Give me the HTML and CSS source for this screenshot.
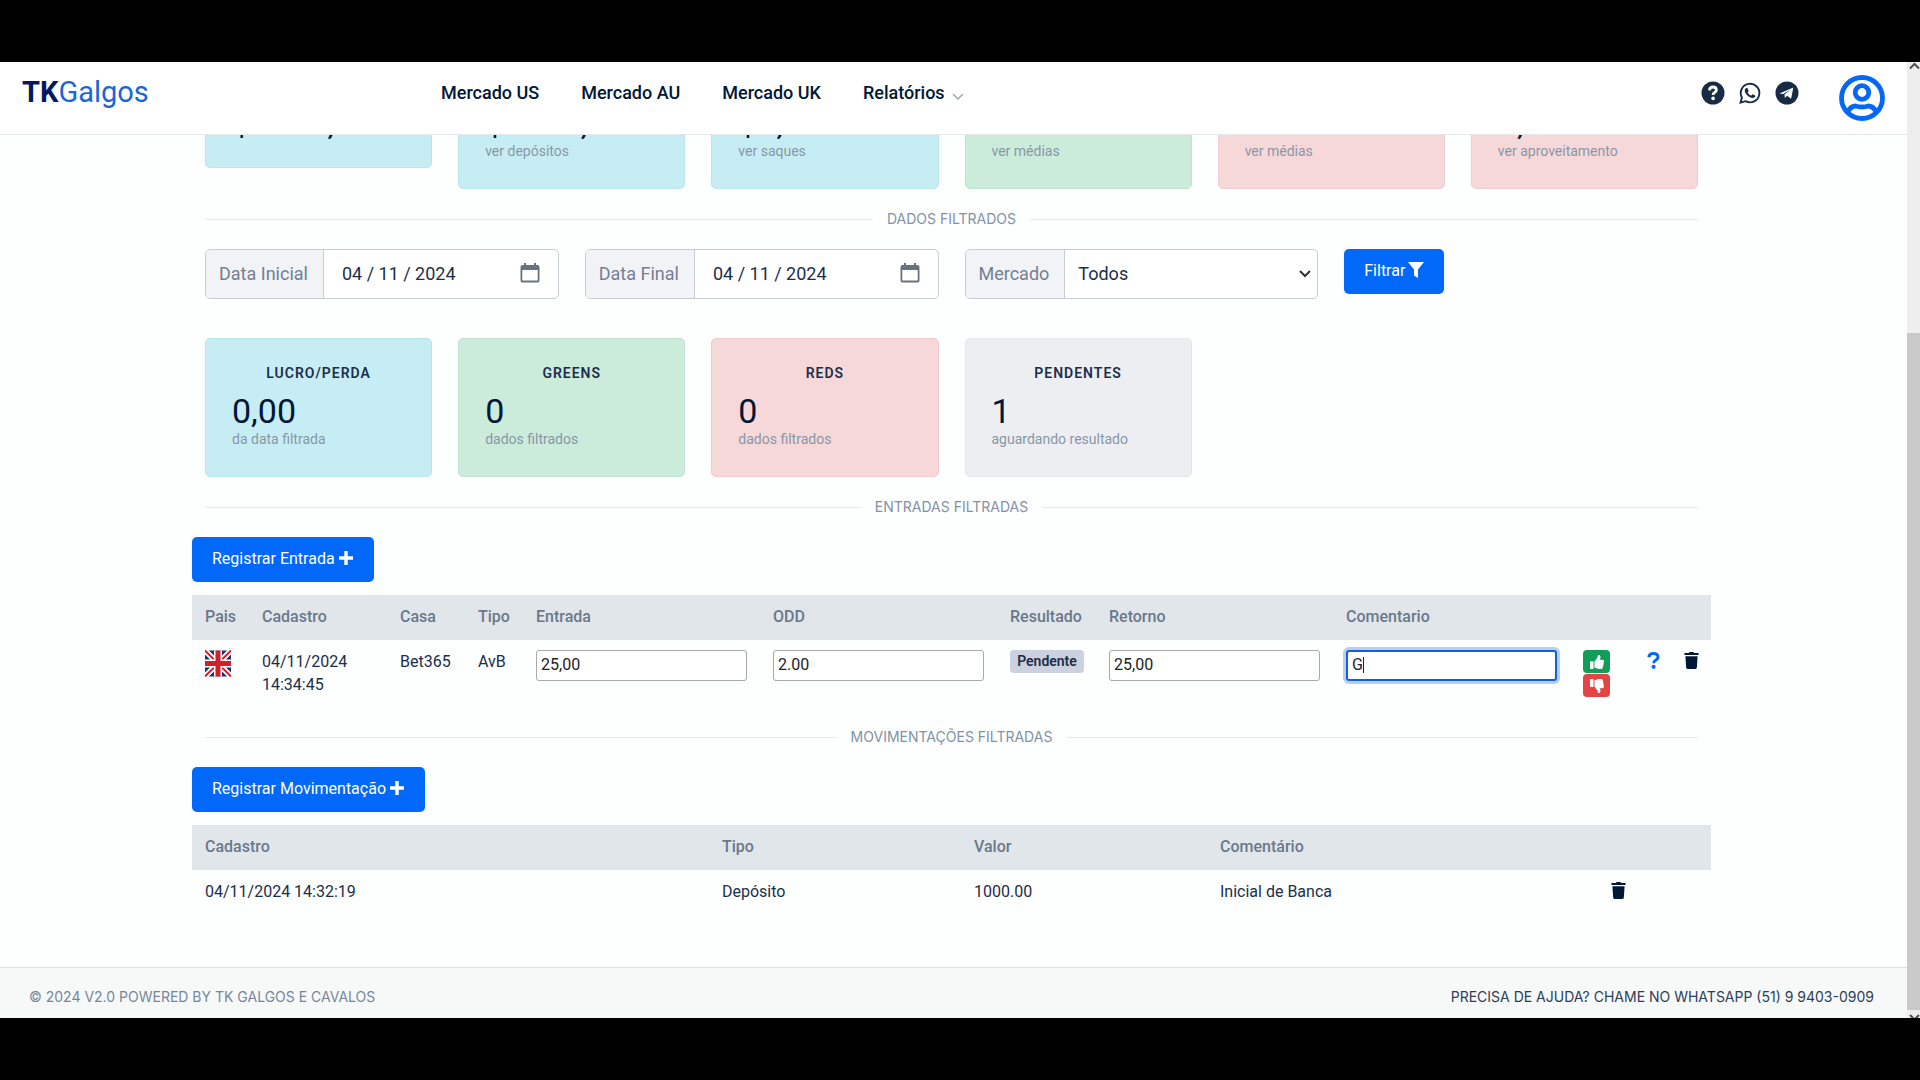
FILE: index.html
```html
<!DOCTYPE html>
<html lang="pt-BR">
<head>
<meta charset="utf-8">
<meta name="viewport" content="width=device-width, initial-scale=1">
<title>TKGalgos</title>
<link rel="stylesheet" href="styles.css">
</head>
<body>
<svg class="sprite" aria-hidden="true">
  <symbol id="plus" viewBox="0 0 16 16"><path d="M6.300 1h3.400v5.300H15v3.400H9.700V15H6.300V9.700H1V6.300h5.300z"/></symbol>
  <symbol id="trash" viewBox="0 0 16 18"><path d="M5 1l1-1h4l1 1h4.500v2.200H.5V1zM1.500 4.500h13l-.8 12q-.1 1.500-1.500 1.500H3.800q-1.400 0-1.500-1.500z"/></symbol>
  <symbol id="calendar" viewBox="0 0 20 20"><path fill-rule="evenodd" d="M4 0h2v2h8V0h2v2h1.500Q19.500 2 19.500 4v13.500q0 2-2 2h-15q-2 0-2-2V4q0-2 2-2H4zM2.300 7v10.500h15.400V7z"/></symbol>
  <symbol id="thumb" viewBox="0 0 512 512"><path d="M104 224H24c-13.300 0-24 10.700-24 24v240c0 13.300 10.700 24 24 24h80c13.300 0 24-10.700 24-24V248c0-13.300-10.700-24-24-24zM384 81.500c0 42.400-26 66.200-33.300 94.500h101.700c33.400 0 59.400 27.700 59.600 58.100.1 17.900-7.500 37.200-19.400 49.200 9.800 23.300 8.200 55.900-9.300 79.300 8.700 25.800-.1 57.500-16.400 74.600 4.300 17.600 2.200 32.600-6.100 44.600C440.500 511.600 389.600 512 346.500 512c-48.300 0-87.800-17.600-119.600-31.700-15.900-7.100-36.800-15.900-52.700-16.200-6.500-.1-11.800-5.500-11.800-12V238.300c0-3.200 1.300-6.300 3.600-8.500 39.600-39.100 56.600-80.600 89.100-113.100 14.800-14.800 20.200-37.200 25.400-58.900C285 39.300 294.200 0 312 0c24 0 72 8 72 81.500z"/></symbol>
</svg>
<div class="app">
  <div class="page">
    <header class="topbar">
      <a class="logo" href="#"><b>TK</b>Galgos</a>
      <nav class="menu">
        <a href="#">Mercado US</a>
        <a href="#">Mercado AU</a>
        <a href="#">Mercado UK</a>
        <a href="#">Relatórios <svg class="caret-down" viewBox="0 0 12 8"><path d="M1 1l5 5 5-5" fill="none" stroke="#a3a9b3" stroke-width="1.500"/></svg></a>
      </nav>
      <div class="social">
        <a href="#" aria-label="Ajuda"><svg viewBox="0 0 24 24"><circle cx="12" cy="12" r="11.500"/><path d="M8.500 9.300Q8.700 6 12 6t3.400 3q0 1.700-1.800 2.600-1.500.8-1.500 2.400" fill="none" stroke="#fff" stroke-width="2.800"/><circle cx="12.100" cy="17.400" r="1.800" fill="#fff"/></svg></a>
        <a href="#" aria-label="WhatsApp"><svg viewBox="0 0 24 24"><path d="M2.500 21.700l1.400-5.200a9.300 9.300 0 1 1 3.700 3.700z" fill="none" stroke="#172b45" stroke-width="1.900"/><path d="M8.400 6.900c-.5 0-1.700.9-1.700 2.700 0 3.100 4.600 7.500 7.900 7.500 1.800 0 2.800-1.200 2.800-2.300 0-.4-2.600-1.600-2.900-1.600-.4 0-1 1.400-1.400 1.400-.7 0-3.400-2.200-3.400-3.100 0-.4 1-.9.900-1.500-.1-.4-.9-2.800-1.300-3z"/></svg></a>
        <a href="#" aria-label="Telegram"><svg viewBox="0 0 24 24"><circle cx="12" cy="12" r="11.500"/><path d="M4.500 12.500L18.300 6.600l-2.200 11.200-4-3-2.200 2.300-.4-3.500 6-5-7.300 4.500z" fill="#fff"/></svg></a>
      </div>
      <a class="account" href="#" aria-label="Conta"><svg viewBox="0 0 46 46"><g fill="none" stroke="#0567f5" stroke-width="4.800"><circle cx="23" cy="23" r="20.500"/><circle cx="23" cy="17.500" r="6.800"/><path d="M8.500 37.500Q11 31.500 16.500 31q6.500 2 13 0 5.500.5 8 6.500"/></g></svg></a>
    </header>

    <main class="content">
      <section class="cards cards-scrolled">
        <article class="card cyan"><strong>$1000,00</strong></article>
        <article class="card cyan"><strong>$1000,00</strong><a href="#">ver depósitos</a></article>
        <article class="card cyan"><strong>$0,00</strong><a href="#">ver saques</a></article>
        <article class="card green"><a href="#">ver médias</a></article>
        <article class="card red"><a href="#">ver médias</a></article>
        <article class="card red"><strong>0,00</strong><a href="#">ver aproveitamento</a></article>
      </section>

      <h3 class="divider">Dados filtrados</h3>

      <form class="filters">
        <div class="group"><label for="ini">Data Inicial</label><input id="ini" type="text" value="04 / 11 / 2024"><button type="button" class="pick" aria-label="Abrir calendário"><svg><use href="#calendar"/></svg></button></div>
        <div class="group"><label for="fim">Data Final</label><input id="fim" type="text" value="04 / 11 / 2024"><button type="button" class="pick" aria-label="Abrir calendário"><svg><use href="#calendar"/></svg></button></div>
        <div class="group"><label for="mercado">Mercado</label><select id="mercado"><option>Todos</option></select><svg class="chevron" viewBox="0 0 12 8"><path d="M1 1l5 5 5-5" fill="none" stroke="#333" stroke-width="2"/></svg></div>
        <div><button type="button" class="btn">Filtrar<svg viewBox="0 0 16 16"><path d="M0 0h16L10 7.500V16l-4-2.500v-6z"/></svg></button></div>
      </form>

      <section class="cards">
        <article class="card cyan"><h2>LUCRO/PERDA</h2><strong>0,00</strong><span>da data filtrada</span></article>
        <article class="card green"><h2>GREENS</h2><strong>0</strong><span>dados filtrados</span></article>
        <article class="card red"><h2>REDS</h2><strong>0</strong><span>dados filtrados</span></article>
        <article class="card gray"><h2>PENDENTES</h2><strong>1</strong><span>aguardando resultado</span></article>
      </section>

      <h3 class="divider">Entradas filtradas</h3>

      <button type="button" class="btn">Registrar Entrada<svg><use href="#plus"/></svg></button>
      <table class="entries">
        <colgroup><col class="c-flag"><col class="c-date"><col class="c-house"><col class="c-type"><col class="c-field"><col class="c-field"><col class="c-result"><col class="c-field"><col class="c-field"><col class="c-vote"><col class="c-help"><col class="c-del"></colgroup>
        <thead><tr><th>Pais</th><th>Cadastro</th><th>Casa</th><th>Tipo</th><th>Entrada</th><th>ODD</th><th>Resultado</th><th>Retorno</th><th>Comentario</th><th></th><th></th><th></th></tr></thead>
        <tbody><tr>
          <td><svg class="flag" viewBox="0 0 26 26" role="img" aria-label="Reino Unido"><path fill="#1d3069" d="M0 0h26v26H0z"/><path d="M0 0l26 26M26 0L0 26" stroke="#fff" stroke-width="5.500"/><path d="M0 0l26 26M26 0L0 26" stroke="#d0202d" stroke-width="2"/><path d="M13 0v26M0 13h26" stroke="#fff" stroke-width="8"/><path d="M13 0v26M0 13h26" stroke="#d0202d" stroke-width="5"/></svg></td>
          <td>04/11/2024 14:34:45</td><td>Bet365</td><td>AvB</td>
          <td><input type="text" value="25,00" aria-label="Entrada"></td>
          <td><input type="text" value="2.00" aria-label="ODD"></td>
          <td><span class="badge">Pendente</span></td>
          <td><input type="text" value="25,00" aria-label="Retorno"></td>
          <td><div class="editing"><input type="text" value="G" aria-label="Comentario"><i></i></div></td>
          <td><div class="votes"><button type="button" class="up" aria-label="Green"><svg><use href="#thumb"/></svg></button><button type="button" class="down" aria-label="Red"><svg><use href="#thumb"/></svg></button></div></td>
          <td><button type="button" class="icon help" aria-label="Pendente"><svg viewBox="0 0 13 18"><path d="M1.500 5.500Q2 1.600 6.300 1.600q4.900 0 4.900 3.600 0 2.200-2.600 3.500Q6.700 9.700 6.700 12" fill="none" stroke="#0567f5" stroke-width="3.100"/><circle cx="6.600" cy="15.700" r="2.200" fill="#0567f5"/></svg></button></td>
          <td><button type="button" class="icon" aria-label="Excluir"><svg><use href="#trash"/></svg></button></td>
        </tr></tbody>
      </table>

      <h3 class="divider">Movimentações filtradas</h3>

      <button type="button" class="btn">Registrar Movimentação<svg><use href="#plus"/></svg></button>
      <table class="moves">
        <colgroup><col class="m-date"><col class="m-type"><col class="m-value"><col class="m-note"><col class="m-del"></colgroup>
        <thead><tr><th>Cadastro</th><th>Tipo</th><th>Valor</th><th>Comentário</th><th></th></tr></thead>
        <tbody><tr><td>04/11/2024 14:32:19</td><td>Depósito</td><td>1000.00</td><td>Inicial de Banca</td><td><button type="button" class="icon" aria-label="Excluir"><svg><use href="#trash"/></svg></button></td></tr></tbody>
      </table>
    </main>

    <footer class="footer"><span>© 2024 v2.0 Powered by TK Galgos e Cavalos</span><a href="#">Precisa de ajuda? Chame no WhatsApp (51) 9 9403-0909</a></footer>
  </div>
  <div class="scrollbar" aria-hidden="true">
    <svg viewBox="0 0 13 8"><path d="M3 6.500L7.500 2 12 6.500" fill="none" stroke="#505050" stroke-width="2"/></svg>
    <div class="thumb"></div>
    <svg viewBox="0 0 13 8"><path d="M3 5l4.500 4.500L12 5" fill="none" stroke="#505050" stroke-width="2"/></svg>
  </div>
</div>
</body>
</html>
```
FILE: styles.css
```css
* { box-sizing: border-box; }

body {
  margin: 0;
  padding: 62px 0;
  min-height: 100vh;
  background: #000;
  color: #1b2e4b;
  font: 16px/23px Roboto, "Liberation Sans", sans-serif;
}

a { color: inherit; text-decoration: none; }
button, input, select { font: inherit; color: inherit; }
button { cursor: pointer; }
svg { fill: currentColor; }
.sprite { display: none; }

.app {
  display: flex;
  min-height: calc(100vh - 124px);
  background: #fdfefe;
}
.page {
  flex: 1;
  min-width: 0;
  display: flex;
  flex-direction: column;
}

/* Top bar */
.topbar {
  display: flex;
  height: 73px;
  padding: 0 22px;
  background: #fff;
  border-bottom: 1px solid #e5e8ea;
  color: #001737;
}
.logo {
  width: 419px;
  padding-top: 13px;
  font-size: 29px;
  line-height: 34px;
  color: #1a66d8;
}
.logo b { color: #031a61; }
.menu {
  display: flex;
  flex: 1;
  gap: 42px;
  padding-top: 19px;
  font-size: 18px;
  line-height: 24px;
  font-weight: 500;
}
.caret-down { width: 12px; height: 8px; margin-left: 3px; vertical-align: -2px; }
.social {
  display: flex;
  gap: 13px;
  padding-top: 19px;
  margin-right: 40px;
  color: #172b45;
}
.social svg { display: block; width: 24px; height: 24px; }
.account { padding-top: 13px; }
.account svg { display: block; width: 46px; height: 46px; }

/* Content */
.content {
  flex: 1;
  margin: 0 196px 0 192px;
}
.cards {
  display: grid;
  grid-template-columns: repeat(6, 1fr);
  gap: 26px;
  align-items: start;
  padding: 0 13px;
}
.cards-scrolled { overflow: hidden; }
.cards-scrolled .card { margin-top: -56px; }
.cards-scrolled .card:nth-child(n + 2) { align-self: end; }
.card {
  display: flex;
  flex-direction: column;
  padding: 25px 26px 26px;
  border: 1px solid;
  border-radius: 5px;
}
.card h2 {
  margin: 0 0 11px;
  font-size: 14px;
  line-height: 18px;
  font-weight: 600;
  letter-spacing: 1px;
  text-align: center;
}
.card strong {
  font-size: 34px;
  line-height: 36px;
  font-weight: 400;
  color: #001737;
}
.card span, .card a {
  font-size: 14px;
  line-height: 21px;
  color: #8797a7;
}
.cyan { background: #c7edf4; border-color: #bce6ee; }
.green { background: #cbebdb; border-color: #bfe3d0; }
.red { background: #f7d8d9; border-color: #efcdce; }
.gray { background: #eceef2; border-color: #e3e7ea; }

.divider {
  display: flex;
  align-items: center;
  gap: 14px;
  margin: 20px 13px;
  font: 400 14px/20px Inter, sans-serif;
  color: #8392a5;
  text-transform: uppercase;
}
.divider::before, .divider::after {
  content: "";
  flex: 1;
  height: 1px;
  background: #e5e9f2;
}

/* Filters */
.filters {
  display: grid;
  grid-template-columns: repeat(4, 1fr);
  gap: 26px;
  padding: 0 13px;
  margin-bottom: 39px;
}
.group {
  display: flex;
  height: 50px;
  border: 1px solid #c8cdd5;
  border-radius: 5px;
  overflow: hidden;
  font-size: 18px;
  background: #fff;
}
.group label {
  display: flex;
  align-items: center;
  padding: 0 15px 2px 13px;
  background: #f2f3f7;
  border-right: 1px solid #c8cdd5;
  color: #737f93;
}
.group input, .group select {
  flex: 1;
  min-width: 0;
  border: 0;
  outline: 0;
  background: none;
  padding: 0 0 2px 18px;
  appearance: none;
}
.group select { padding-left: 13px; }
.chevron { width: 12px; height: 8px; align-self: center; margin-right: 6px; }
.pick {
  padding: 0 18px 2px 0;
  border: 0;
  background: none;
  color: #68727e;
}
.pick svg { display: block; width: 20px; height: 20px; }

.btn {
  height: 45px;
  padding: 0 20px 2px;
  border: 0;
  border-radius: 5px;
  background: #0168fa;
  color: #fff;
}
.btn svg { width: 16px; height: 16px; margin-left: 3px; vertical-align: -2px; }

/* Tables */
table {
  width: 100%;
  margin-top: 13px;
  table-layout: fixed;
  border-collapse: collapse;
}
th, td {
  padding: 10px 13px;
  text-align: left;
  vertical-align: top;
}
th {
  padding: 10px 0 12px 13px;
  background: #e1e6ea;
  font-weight: 500;
  color: #6b788c;
}
.c-flag { width: 57px; }
.c-date { width: 138px; }
.c-house { width: 78px; }
.c-type { width: 58px; }
.c-result { width: 99px; }
.c-vote { width: 64px; }
.c-help { width: 37px; }
.c-del { width: 40px; }
.m-type { width: 252px; }
.m-value { width: 246px; }
.m-note { width: 391px; }
.m-del { width: 113px; }

.flag { display: block; width: 26px; height: 27px; }
td input {
  display: block;
  width: 100%;
  height: 31px;
  padding: 0 4px 2px;
  border: 1px solid #a9a9ab;
  border-radius: 3px;
  background: #fff;
  color: #222;
  outline: 0;
}
.editing { position: relative; }
.editing input {
  border: 2px solid #1560d4;
  box-shadow: 0 0 0 3px #b5d0f5;
}
.editing i {
  position: absolute;
  top: 7px;
  left: 17px;
  width: 1px;
  height: 16px;
  background: #222;
}
.badge {
  display: block;
  width: 74px;
  border-radius: 4px;
  background: #cbd1de;
  font-size: 14px;
  font-weight: 600;
  text-align: center;
}
.entries td:nth-child(7) { padding-right: 0; }
.votes { display: grid; gap: 1px; }
.votes button {
  display: flex;
  align-items: center;
  justify-content: center;
  width: 27px;
  height: 23px;
  padding: 0;
  border: 0;
  border-radius: 4px;
  background: #0f9d58;
  color: #fff;
}
.votes .down { background: #e54444; }
.votes svg { width: 14px; height: 14px; }
.down svg { transform: scaleY(-1); }
.icon {
  display: block;
  padding: 2px 0 0;
  border: 0;
  background: none;
  color: #001737;
}
.icon svg { display: block; width: 15px; height: 17px; }
.help svg { width: 13px; }
.entries td:nth-child(11), .entries td:nth-child(12) { padding-right: 0; }

/* Footer */
.footer {
  display: flex;
  justify-content: space-between;
  padding: 18px 33px 10px 29px;
  border-top: 1px solid #dde2e5;
  background: #f7f9f9;
  font: 14px/22px Inter, sans-serif;
  text-transform: uppercase;
  color: #76869a;
}
.footer a { color: #2b3d57; }

/* Scroll track */
.scrollbar {
  display: flex;
  flex-direction: column;
  width: 13px;
  background: #eeeeef;
}
.scrollbar svg { display: block; width: 13px; height: 8px; }
.thumb { flex: 1; margin-top: 263px; background: #c9c9ca; }
```
